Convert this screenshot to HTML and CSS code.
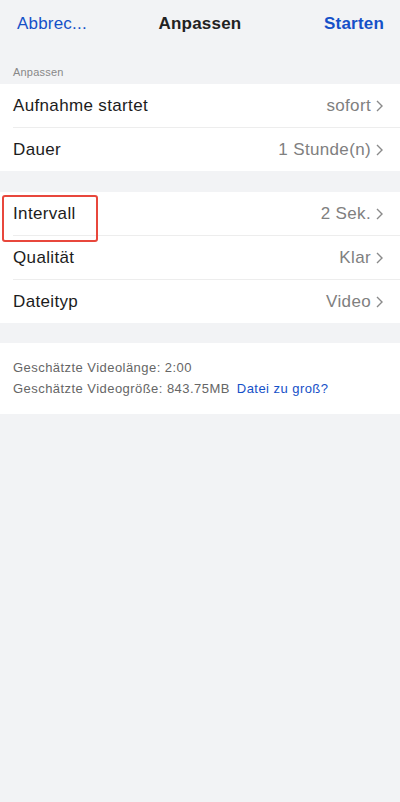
FILE: index.html
```html
<!DOCTYPE html>
<html lang="de">
<head>
<meta charset="utf-8">
<link rel="stylesheet" href="styles.css">
</head>
<body>
<div class="page">
  <header class="nav">
    <span class="nav-btn left">Abbrec...</span>
    <span class="nav-title">Anpassen</span>
    <span class="nav-btn right">Starten</span>
  </header>
  <div class="section-label">Anpassen</div>
  <div class="group">
    <div class="row"><span class="label">Aufnahme startet</span><span class="value">sofort<svg class="chev" viewBox="0 0 7 12"><path d="M1 1l5 5-5 5"/></svg></span></div>
    <div class="row"><span class="label">Dauer</span><span class="value">1 Stunde(n)<svg class="chev" viewBox="0 0 7 12"><path d="M1 1l5 5-5 5"/></svg></span></div>
  </div>
  <div class="group g2">
    <div class="row hl"><span class="label">Intervall</span><span class="value">2 Sek.<svg class="chev" viewBox="0 0 7 12"><path d="M1 1l5 5-5 5"/></svg></span></div>
    <div class="row"><span class="label">Qualität</span><span class="value">Klar<svg class="chev" viewBox="0 0 7 12"><path d="M1 1l5 5-5 5"/></svg></span></div>
    <div class="row"><span class="label">Dateityp</span><span class="value">Video<svg class="chev" viewBox="0 0 7 12"><path d="M1 1l5 5-5 5"/></svg></span></div>
  </div>
  <div class="info">
    <p>Geschätzte Videolänge: 2:00</p>
    <p>Geschätzte Videogröße: 843.75MB <span class="link">Datei zu groß?</span></p>
  </div>
</div>
</body>
</html>
```
FILE: styles.css
```css
* { box-sizing: border-box; }
html, body { margin: 0; padding: 0; }
body {
  background: #f2f3f5;
  font-family: "Liberation Sans", Arial, sans-serif;
  width: 400px;
  height: 802px;
}
.page { display: flex; flex-direction: column; }
.nav {
  height: 44px;
  padding: 4px 16px 0 17px;
  display: flex;
  align-items: center;
  justify-content: space-between;
  position: relative;
  font-size: 17px;
  letter-spacing: 0.2px;
}
.nav-btn { color: #1550c8; }
.nav-btn.right { font-weight: bold; }
.nav-title {
  position: absolute;
  left: 0; right: 0;
  top: 4px; bottom: 0;
  display: flex;
  align-items: center;
  justify-content: center;
  color: #222;
  font-weight: bold;
  pointer-events: none;
}
.section-label {
  font-size: 11px;
  color: #888;
  padding: 22px 13px 5px;
  line-height: 13px;
  letter-spacing: 0.2px;
}
.group {
  background: #fff;
  padding-left: 13px;
}
.g2 { margin-top: 21px; }
.row {
  height: 44px;
  display: flex;
  align-items: center;
  justify-content: space-between;
  padding-right: 17px;
  border-bottom: 1px solid #ededed;
  font-size: 17px;
  letter-spacing: 0.35px;
  position: relative;
}
.row:last-child { border-bottom: none; height: 43px; }
.label { color: #1c1c1c; }
.hl::before {
  content: "";
  position: absolute;
  left: -11px; top: 3px;
  width: 92px; height: 43px;
  border: 2px solid #e8473c;
  border-radius: 3px;
}
.value {
  color: #808080;
  display: flex;
  align-items: center;
  gap: 5px;
}
.chev {
  width: 7px;
  height: 12px;
  fill: none;
  stroke: #8a8a8a;
  stroke-width: 1.4;
}
.info {
  background: #fff;
  margin-top: 20px;
  padding: 14px 13px 15px;
  font-size: 13px;
  color: #666;
  letter-spacing: 0.45px;
}
.info p { margin: 0; line-height: 21px; }
.link { color: #1550c8; margin-left: 3px; }
```
